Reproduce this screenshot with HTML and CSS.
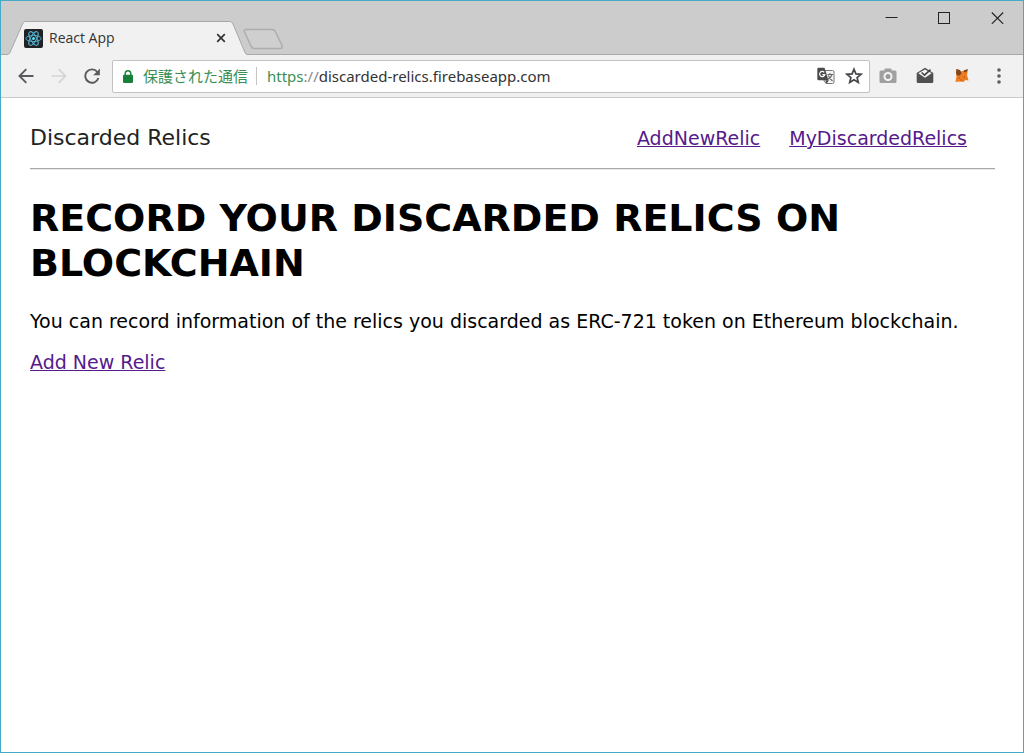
FILE: index.html
```html
<!DOCTYPE html>
<html lang="ja">
<head>
<meta charset="utf-8">
<title>React App</title>
<link rel="stylesheet" href="styles.css">
</head>
<body>
<div class="window">
  <div class="tab-strip">
    <div class="tab">
      <svg class="tab-shape" viewBox="0 0 240 34" width="240" height="34"><path d="M0 33.500H1L3 31.500L15.500 3Q16.500 .5 18 .5H224L225.500 2L238 32L240 33.500V34H0Z" fill="#f1f1f1"/><path d="M0 33.500Q2 33.500 3 31.500L15.500 3Q16.500 .5 18 .5H223Q225 .5 226 3L238 31.500Q239 33.500 240 33.500" fill="none" stroke="#a9a9a9"/></svg>
      <div class="tab-content">
        <svg class="favicon" viewBox="0 0 19 19" width="19" height="19"><rect width="19" height="19" rx="2" fill="#222"/><g fill="none" stroke="#51afce" stroke-width="1"><ellipse cx="9.500" cy="9.500" rx="7.700" ry="3"/><ellipse cx="9.500" cy="9.500" rx="7.700" ry="3" transform="rotate(60 9.500 9.500)"/><ellipse cx="9.500" cy="9.500" rx="7.700" ry="3" transform="rotate(120 9.500 9.500)"/></g><circle cx="9.500" cy="9.500" r="1.500" fill="#61dafb"/></svg>
        <span class="tab-title">React App</span>
        <button class="icon-button tab-close" aria-label="Close tab"><svg viewBox="0 0 10 10" width="10" height="10"><path d="M1.200 1.200 8.800 8.800M8.800 1.200 1.200 8.800" stroke="#333" stroke-width="1.700"/></svg></button>
      </div>
    </div>
    <button class="icon-button new-tab" aria-label="New tab"><svg viewBox="0 0 41 22" width="41" height="22"><path d="M3 1.500H29Q31.500 1.500 32.500 4L39 17.500Q40 20.500 37 20.500H11.500Q9 20.500 8 18L1.500 4Q.8 1.500 3 1.500Z" fill="#cfcfcf" stroke="#adadad" stroke-width="1.500"/></svg></button>
    <div class="window-controls">
      <button class="icon-button" aria-label="Minimize"><svg viewBox="0 0 13 13" width="13" height="13"><path d="M.5 5.500H12.500" stroke="#222"/></svg></button>
      <button class="icon-button" aria-label="Maximize"><svg viewBox="0 0 13 13" width="13" height="13"><rect x=".5" y=".5" width="11" height="11" fill="none" stroke="#222"/></svg></button>
      <button class="icon-button" aria-label="Close"><svg viewBox="0 0 13 13" width="13" height="13"><path d="M.8.5 12.200 11.900M12.200.5.8 11.900" stroke="#222" stroke-width="1.100"/></svg></button>
    </div>
  </div>
  <div class="toolbar">
    <div class="nav-buttons">
      <button class="icon-button" aria-label="Back"><svg viewBox="0 0 16 16" width="16" height="16"><path d="M15.500 8H2M8.300 1.200 1.500 8 8.300 14.800" fill="none" stroke="#5a5a5f" stroke-width="1.900"/></svg></button>
      <button class="icon-button" aria-label="Forward" disabled><svg viewBox="0 0 16 16" width="16" height="16"><path d="M.5 8H14M7.700 1.200 14.500 8 7.700 14.800" fill="none" stroke="#d3d3d3" stroke-width="1.700"/></svg></button>
      <button class="icon-button" aria-label="Reload"><svg viewBox="0 0 16 16" width="16" height="16"><path d="M13.300 4A6.700 6.700 0 1 0 14.400 10" fill="none" stroke="#5a5a5f" stroke-width="1.900"/><path d="M15.900.5V7.200H9.200Z" fill="#5a5a5f"/></svg></button>
    </div>
    <div class="address-bar">
      <svg class="lock" viewBox="0 0 10 13" width="10" height="13"><path d="M2.200 6V3.600a2.800 2.800 0 0 1 5.600 0V6" fill="none" stroke="#188038" stroke-width="1.400"/><rect y="4.800" width="10" height="8.200" rx="1" fill="#188038"/></svg>
      <label class="secure" for="url">保護された通信</label>
      <div class="url"><span class="scheme">https</span><span class="slashes">://</span>discarded-relics.firebaseapp.com<input class="url-input" id="url" type="text" aria-label="Address"></div>
      <button class="icon-button" aria-label="Translate"><svg viewBox="0 0 18 18" width="18" height="18"><path d="M7 3.500H15.500Q17 3.500 17 5V15Q17 16.500 15.500 16.500H9L6 12Z" fill="#f5f5f5" stroke="#777"/><path d="M1.500.8H7.500L11.500 13.300H1.500Q.3 13.300.3 12V2Q.3.8 1.500.8Z" fill="#4a4a4a"/><path d="M8.300 13.300H12L9.500 16.800Z" fill="#4a4a4a"/><path d="M7.200 5.300A2.600 2.600 0 1 0 7.800 7.600H5.400" fill="none" stroke="#fff" stroke-width="1.200"/><path d="M10.500 7.500H16M13 6V7.500M15 7.500Q14 11 10.800 12.500M11.300 8.500Q12.500 11.500 15.500 14" fill="none" stroke="#666" stroke-width="1.100"/></svg></button>
      <button class="icon-button" aria-label="Bookmark"><svg viewBox="0 0 18 18" width="18" height="18"><path d="M9 2.200 10.900 6.900 16 7.300 12.100 10.500 13.300 15.500 9 12.800 4.700 15.500 5.900 10.500 2 7.300 7.100 6.900Z" fill="none" stroke="#45454a" stroke-width="1.700"/></svg></button>
    </div>
    <div class="extensions">
      <button class="icon-button" aria-label="Capture"><svg viewBox="0 0 18 18" width="18" height="18"><path d="M1.800 3.500H5L6 1.500H12L13 3.500H16.200Q17.500 3.500 17.500 5V14.500Q17.500 16 16.200 16H1.800Q.5 16 .5 14.500V5Q.5 3.500 1.800 3.500Z" fill="#a0a0a0"/><circle cx="9" cy="9.500" r="4.500" fill="#f3f3f3"/><circle cx="9" cy="9.500" r="2.500" fill="#999"/></svg></button>
      <button class="icon-button" aria-label="Inbox"><svg viewBox="0 0 18 18" width="18" height="18"><path d="M.7 6 9 .8 17.300 6V14.500Q17.300 16 16 16H2Q.7 16 .7 14.500Z" fill="#505050"/><path d="M2.300 6.200 9 2.500 15.700 6.200 9 10.800Z" fill="#f4f4f4"/><path d="M5.600 5.500 8.500 8.200 14.500 2.600" fill="none" stroke="#444" stroke-width="1.600"/></svg></button>
      <button class="icon-button" aria-label="Wallet"><svg viewBox="0 0 18 18" width="18" height="18"><path d="M3.500 2 7 4.500 10 4 15 2.300 14 8 15.500 13.500 12.500 13 10.500 15 7 14.500 2.500 15 3.500 9 3 6Z" fill="#ed7d22"/><path d="M3.500 2 7 3 8.500 6 7 8.500 4 8.500 3 6ZM15 2.300 11.500 3 10.500 4.500 13 5.500Z" fill="#80441f"/><path d="M5.500 10.500H7V11.500H5.500ZM10.500 9.500H12V10.500H10.500ZM7.500 12.500H9V13.500H7.500Z" fill="#a84e18"/></svg></button>
      <button class="icon-button" aria-label="Menu"><svg viewBox="0 0 18 18" width="18" height="18" fill="#5a5a5f"><circle cx="9" cy="3" r="1.800"/><circle cx="9" cy="9" r="1.800"/><circle cx="9" cy="15" r="1.800"/></svg></button>
    </div>
  </div>
  <div class="page">
    <header class="site-header">
      <span class="brand">Discarded Relics</span>
      <nav class="site-nav"><a href="#add">AddNewRelic</a><a href="#mine">MyDiscardedRelics</a></nav>
    </header>
    <hr class="divider">
    <main>
      <h1 class="headline">RECORD YOUR DISCARDED RELICS ON BLOCKCHAIN</h1>
      <p class="intro">You can record information of the relics you discarded as ERC-721 token on Ethereum blockchain.</p>
      <a href="#add">Add New Relic</a>
    </main>
  </div>
</div>
</body>
</html>
```
FILE: styles.css
```css
* { box-sizing: border-box; }

body {
  margin: 0;
  background: #fff;
  font-family: Verdana, "DejaVu Sans", sans-serif;
}

.window {
  min-height: 100vh;
  border: 1px solid #45abc5;
}

.icon-button {
  display: flex;
  padding: 0;
  border: 0;
  background: none;
}

.tab-strip {
  display: flex;
  align-items: flex-end;
  height: 54px;
  padding-left: 6px;
  border-bottom: 1px solid #a9a9a9;
  background: #ccc;
}

.tab {
  display: grid;
  width: 240px;
  margin-bottom: -1px;
}

.tab-shape, .tab-content { grid-area: 1 / 1; }

.tab-content {
  display: flex;
  align-items: center;
  gap: 6px;
  padding: 0 21px 0 17px;
}

.tab-title {
  flex: 1;
  color: #333;
  font: 14px/20px "Open Sans", "Noto Sans", sans-serif;
}

.new-tab { margin: 0 0 4px -4px; }

.window-controls {
  display: flex;
  align-self: flex-start;
  gap: 40px;
  margin-left: auto;
  padding: 11px 19px 0 0;
}

.toolbar {
  display: flex;
  align-items: center;
  height: 43px;
  padding: 0 15px 0 17px;
  border-bottom: 1px solid #c9c9c9;
  background: #f1f1f1;
}

.nav-buttons {
  display: flex;
  gap: 17px;
  margin-right: 12px;
}

.address-bar {
  display: flex;
  flex: 1;
  align-items: center;
  gap: 10px;
  height: 33px;
  padding: 0 6px 0 10px;
  border: 1px solid #c2c2c2;
  border-radius: 2px;
  background: #fff;
}

.secure {
  padding-right: 8px;
  border-right: 1px solid #c4c4c4;
  color: #3b8f53;
  font: 15px/18px "Noto Sans CJK JP", sans-serif;
}

.url {
  display: flex;
  flex: 1;
  color: #333;
  font: 15px/20px "Noto Sans", sans-serif;
}

.url-input {
  flex: 1;
  min-width: 0;
  border: 0;
  background: none;
}

.scheme { color: #3b8f53; }
.slashes { color: #8a8a8a; }

.extensions {
  display: flex;
  gap: 19px;
  margin-left: 9px;
}

.page {
  padding: 24px 28px 20px 29px;
  font-size: 19px;
  line-height: 24px;
}

.page a { color: #551a8b; }

.site-header {
  display: flex;
  align-items: baseline;
  justify-content: space-between;
}

.brand {
  color: #222;
  font-size: 22px;
  line-height: 32px;
}

.site-nav {
  display: flex;
  gap: 29px;
  padding-right: 28px;
}

.divider {
  height: 2px;
  margin: 14px 0 0;
  border: 0;
  border-top: 1px solid #aaa;
  border-bottom: 1px solid #e8e8e8;
}

.headline {
  margin: 26px 0 23px;
  font-size: 38px;
  line-height: 45px;
}

.intro { margin: 0 0 17px; }
```
